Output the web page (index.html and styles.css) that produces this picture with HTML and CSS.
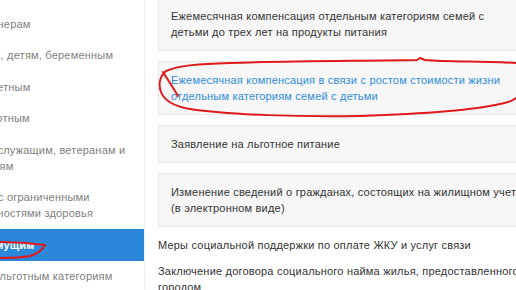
FILE: index.html
```html
<!DOCTYPE html>
<html lang="ru">
<head>
<meta charset="utf-8">
<link rel="stylesheet" href="styles.css">
</head>
<body>
<div class="page">
  <nav class="sidebar">
    <a class="nav-item">Пенсионерам</a>
    <a class="nav-item">Семьям, детям, беременным</a>
    <a class="nav-item">Многодетным</a>
    <a class="nav-item">Безработным</a>
    <a class="nav-item">Военнослужащим, ветеранам и их семьям</a>
    <a class="nav-item">Людям с ограниченными возможностями здоровья</a>
    <a class="nav-item active">Малоимущим</a>
    <a class="nav-item">Другим льготным категориям граждан</a>
  </nav>
  <main class="content">
    <div class="card">Ежемесячная компенсация отдельным категориям семей с детьми до трех лет на продукты питания</div>
    <div class="card link">Ежемесячная компенсация в связи с ростом стоимости жизни отдельным категориям семей с детьми</div>
    <div class="card">Заявление на льготное питание</div>
    <div class="card">Изменение сведений о гражданах, состоящих на жилищном учете (в электронном виде)</div>
    <div class="plain">Меры социальной поддержки по оплате ЖКУ и услуг связи</div>
    <div class="plain">Заключение договора социального найма жилья, предоставленного городом</div>
  </main>
</div>
<svg class="marks" width="516" height="290" viewBox="0 0 516 290">
  <path d="M516 63 C480 61 450 62 425 60 L420 58 L417 60 C350 61 280 61 230 63 C200 64 180 65 166 71 C160 76 158 84 161 92 C164 100 172 106 190 109 C230 115 300 117 360 116 C420 114 470 111 500 104 C510 102 514 100 516 98"/>
  <path d="M163 72 C168 80 172 86 178 96"/>
  <path d="M0 242 C15 242 30 243 45 245 C42 250 38 254 30 256 C20 258 10 258 0 258"/>
</svg>
</body>
</html>
```
FILE: styles.css
```css
html, body {
  margin: 0;
  padding: 0;
  background: #fff;
  overflow: hidden;
}
body {
  width: 516px;
  height: 290px;
  position: relative;
  font-family: "Liberation Sans", Arial, sans-serif;
  font-size: 11px;
  line-height: 16px;
  letter-spacing: 0.2px;
}
.page {
  display: flex;
  align-items: flex-start;
  margin: -3px 0 0 -60px;
}
.sidebar {
  flex: 0 0 auto;
  width: 205px;
  box-sizing: border-box;
  padding-top: 11px;
  border-right: 1px solid #eeeeee;
  min-height: 300px;
  display: flex;
  flex-direction: column;
}
.nav-item {
  display: block;
  padding: 7.75px 12px 7.75px 18.5px;
  color: #808080;
}
.nav-item.active {
  background: #2b87da;
  color: #fff;
  font-weight: bold;
}
.content {
  flex: 0 0 auto;
  width: 380px;
  margin-left: 13px;
  display: flex;
  flex-direction: column;
  color: #333;
}
.card {
  background: #f7f7f7;
  border: 1px solid #e8e8e8;
  padding: 10px 12px;
  margin-bottom: 10px;
}
.card.link {
  color: #2d8cdc;
}
.plain {
  margin-bottom: 10px;
}
.marks {
  position: absolute;
  left: 0;
  top: 0;
  fill: none;
  stroke: #e0191b;
  stroke-width: 2;
  stroke-linecap: round;
  stroke-linejoin: round;
}
```
